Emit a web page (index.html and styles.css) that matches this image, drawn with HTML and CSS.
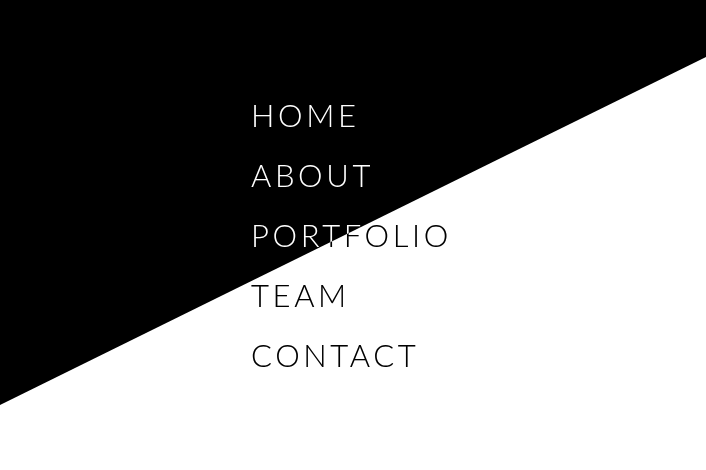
FILE: index.html
```html
<!DOCTYPE html>
<html>
<head>
<meta charset="utf-8">
<link rel="stylesheet" href="styles.css">
</head>
<body>
<div class="stage">
  <div class="shade"></div>
  <nav class="menu">
    <a class="item" href="#">HOME</a>
    <a class="item" href="#">ABOUT</a>
    <a class="item" href="#">PORTFOLIO</a>
    <a class="item" href="#">TEAM</a>
    <a class="item" href="#">CONTACT</a>
  </nav>
</div>
</body>
</html>
```
FILE: styles.css
```css
html, body {
  margin: 0;
  padding: 0;
  background: #fff;
}
.stage {
  position: relative;
  width: 706px;
  height: 470px;
  overflow: hidden;
  background: #fff;
  isolation: isolate;
}
.shade {
  position: absolute;
  inset: 0;
  background: #000;
  clip-path: polygon(0 0, 100% 0, 100% 57px, 0 405px);
}
.menu {
  position: relative;
  display: flex;
  flex-direction: column;
  padding: 89px 0 0 251px;
  mix-blend-mode: difference;
}
.item {
  display: block;
  height: 60px;
  line-height: 52px;
  color: #fff;
  text-decoration: none;
  font-family: "Lato", sans-serif;
  font-weight: 300;
  font-size: 31px;
  letter-spacing: 3.6px;
}
```
